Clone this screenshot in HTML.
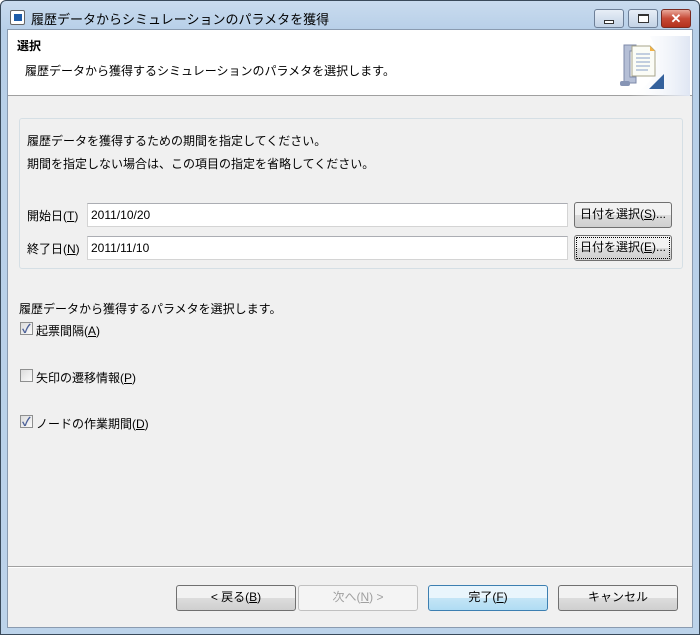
<!DOCTYPE html>
<html><head><meta charset="utf-8"><style>
*{margin:0;padding:0;box-sizing:border-box}
body{width:700px;height:635px;overflow:hidden;background:#fff;font-family:"Liberation Sans","Noto Sans CJK JP",sans-serif;font-size:12px;color:#000}
.win{position:absolute;left:0;top:0;width:700px;height:635px;border:1px solid #3a4a5a;border-radius:6px 6px 0 0;background:linear-gradient(#c9dbee,#b7cfe8 30px,#bcd3ea);}
.title{position:absolute;left:30px;top:9px;font-size:13px;color:#000}
.client{position:absolute;left:6px;top:28px;width:686px;height:599px;background:#f0f0f0;border:1px solid #8a9bb0}
.banner{position:absolute;left:0;top:0;width:684px;height:66px;background:#fff;border-bottom:1px solid #a0a0a0}
.abs{position:absolute;white-space:nowrap}
.grp{position:absolute;left:11px;top:88px;width:664px;height:151px;border:1px solid #d5dfe5;border-radius:3px}
.inp{position:absolute;height:24px;background:#fff;border:1px solid #d4d4d4;border-top-color:#abadb3;padding:4px 3px}
.btn{position:absolute;height:26px;border:1px solid #707070;border-radius:3px;background:linear-gradient(#f2f2f2 50%,#dddddd 50%,#cfcfcf);text-align:center;line-height:23px}
.cb{position:absolute;width:13px;height:13px;border:1px solid #8e8f8f;background:linear-gradient(135deg,#dcdcdc,#fbfbfb)}
.cb.c::after{content:"✓";position:absolute;left:1px;top:-3px;font-size:12px;color:#4a5f97;font-weight:bold}
u{text-decoration:underline}
.wb{position:absolute;top:8px;height:19px;border:1px solid #6d7f97;border-radius:3px;background:linear-gradient(#e7eef7,#c3d3e6)}
</style></head><body>
<div class="win">
 <div class="abs" style="left:9px;top:9px;width:15px;height:15px;border:1px solid #666;border-radius:2px;background:#fff"><div style="position:absolute;left:3px;top:3px;width:8px;height:7px;background:#1e5ca8"></div></div>
 <div class="title" style="top:8px">履歴データからシミュレーションのパラメタを獲得</div>
 <div class="wb" style="left:593px;width:30px"><div style="position:absolute;left:9px;top:10px;width:10px;height:4px;border:1px solid #333;background:#fff"></div></div>
 <div class="wb" style="left:627px;width:30px"><div style="position:absolute;left:9px;top:4px;width:11px;height:9px;border:1px solid #333;border-top-width:2px;background:#fff"></div></div>
 <div class="wb" style="left:660px;width:30px;border-color:#7a2a20;background:linear-gradient(#e9a89a,#c74a36 50%,#b3301c)"><div style="position:absolute;left:0;top:0;width:28px;text-align:center;color:#fff;font-weight:bold;font-size:13px;line-height:17px">✕</div></div>
 <div class="client">
  <div class="banner">
   <div class="abs" style="left:9px;top:7px;font-weight:bold">選択</div>
   <div class="abs" style="left:17px;top:32px">履歴データから獲得するシミュレーションのパラメタを選択します。</div>
   <svg class="abs" style="left:602px;top:6px" width="80" height="60">
    <defs><linearGradient id="g" x1="0" x2="1"><stop offset="0" stop-color="#ffffff" stop-opacity="0"/><stop offset="1" stop-color="#dfe6f3"/></linearGradient></defs>
    <path d="M40 0 H80 V60 H20 Q60 40 40 0Z" fill="url(#g)"/>
    <path d="M14 9 h12 v6 h-6 v26 h6 v6 h-12 z" fill="#b5bfd6" stroke="#7d89a8"/>
    <rect x="10" y="45" width="10" height="5" rx="2" fill="#8795b5"/>
    <path d="M22 10 h18 l5 5 v25 h-23z" fill="#fbfcf6" stroke="#a7a48a"/>
    <path d="M40 10 l5 5 h-5z" fill="#f2b347"/>
    <path d="M26 18h14M26 22h14M26 26h14M26 30h14M26 34h12" stroke="#8aa0c8"/>
    <path d="M54 38 L54 53 L39 53Z" fill="#34619c"/>
   </svg>
  </div>
  <div class="grp"></div>
  <div class="abs" style="left:19px;top:102px">履歴データを獲得するための期間を指定してください。</div>
  <div class="abs" style="left:19px;top:125px">期間を指定しない場合は、この項目の指定を省略してください。</div>
  <div class="abs" style="left:19px;top:177px">開始日(<u>T</u>)</div>
  <div class="inp" style="left:79px;top:173px;width:481px">2011/10/20</div>
  <div class="btn" style="left:566px;top:172px;width:98px">日付を選択(<u>S</u>)...</div>
  <div class="abs" style="left:19px;top:210px">終了日(<u>N</u>)</div>
  <div class="inp" style="left:79px;top:206px;width:481px">2011/11/10</div>
  <div class="btn" style="left:566px;top:205px;width:98px;outline:1px dotted #000;outline-offset:-3px">日付を選択(<u>E</u>)...</div>
  <div class="abs" style="left:11px;top:270px">履歴データから獲得するパラメタを選択します。</div>
  <div class="cb c" style="left:12px;top:292px"></div><div class="abs" style="left:28px;top:292px">起票間隔(<u>A</u>)</div>
  <div class="cb" style="left:12px;top:339px"></div><div class="abs" style="left:28px;top:339px">矢印の遷移情報(<u>P</u>)</div>
  <div class="cb c" style="left:12px;top:385px"></div><div class="abs" style="left:28px;top:385px">ノードの作業期間(<u>D</u>)</div>
  <div style="position:absolute;left:0;top:536px;width:684px;border-top:1px solid #a0a0a0;border-bottom:1px solid #fff"></div>
  <div class="btn" style="left:168px;top:555px;width:120px">&lt; 戻る(<u>B</u>)</div>
  <div class="btn" style="left:290px;top:555px;width:120px;border-color:#c0c0c0;background:#f4f4f4;color:#a0a0a0">次へ(<u>N</u>) &gt;</div>
  <div class="btn" style="left:420px;top:555px;width:120px;border-color:#3c7fb1;background:linear-gradient(#e9f5fc 50%,#c4e5f6 50%,#b0dcf3)">完了(<u>F</u>)</div>
  <div class="btn" style="left:550px;top:555px;width:120px">キャンセル</div>
 </div>
</div>
</body></html>
